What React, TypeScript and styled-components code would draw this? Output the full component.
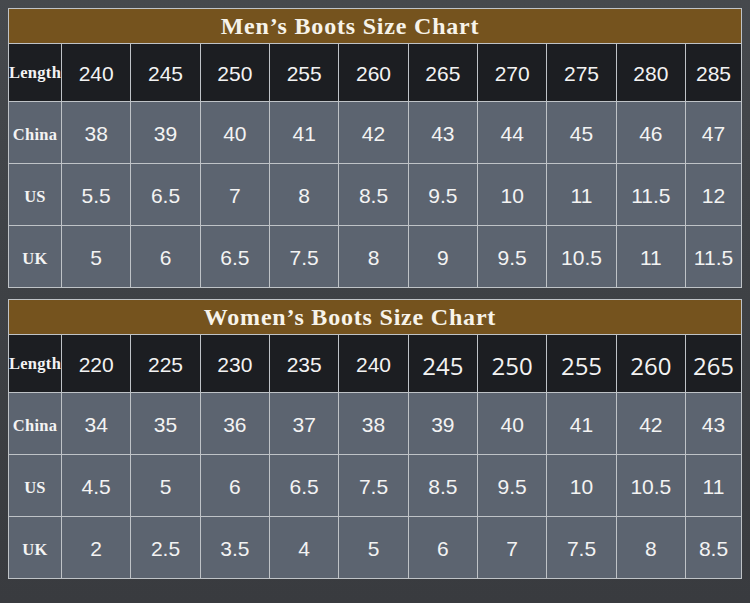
import React from "react";
import styled, { createGlobalStyle } from "styled-components";

const GlobalStyle = createGlobalStyle`
  html, body {
    margin: 0;
    padding: 0;
  }
  body {
    background: #3b3e42;
  }
`;

const Page = styled.div`
  min-height: 603px;
  box-sizing: border-box;
  padding: 8px 0 0 8px;
  background: linear-gradient(180deg, #46494d 0%, #3e4145 50%, #393b3f 100%);
  display: flex;
  flex-direction: column;
  gap: 11px;
`;

const Chart = styled.div`
  width: 734px;
  box-sizing: border-box;
  display: grid;
  grid-template-columns: 52px repeat(9, 1fr) 55px;
  grid-template-rows: 34px 57px 61px 61px 61px;
  gap: 1px;
  padding: 1px;
  background: #bfc3c7;
`;

const Title = styled.div`
  grid-column: 1 / -1;
  background: #75531e;
  color: #f7f3ea;
  font-family: "Liberation Serif", "DejaVu Serif", serif;
  font-weight: bold;
  font-size: 24px;
  letter-spacing: 0.8px;
  display: flex;
  align-items: center;
  justify-content: center;
  padding-right: 50px;
`;

const Cell = styled.div<{ $head?: boolean }>`
  background: ${(p) => (p.$head ? "#1c1e22" : "#5c6470")};
  color: #f3f3f3;
  display: flex;
  align-items: center;
  justify-content: center;
  padding-top: 3px;
  box-sizing: border-box;
`;

const Label = styled(Cell)`
  font-family: "Liberation Serif", "DejaVu Serif", serif;
  font-weight: bold;
  font-size: 16.5px;
  letter-spacing: 0.3px;
  padding-top: ${(p) => (p.$head ? "0" : "4px")};
`;

const Value = styled(Cell)<{ $alt?: boolean }>`
  font-family: ${(p) =>
    p.$alt ? `"Open Sans", "Noto Sans", sans-serif` : `"Liberation Sans", Arial, sans-serif`};
  font-size: ${(p) => (p.$alt ? "24px" : "21px")};
`;

type Row = { label: string; values: string[]; altFrom?: number };

type ChartData = { title: string; rows: Row[] };

const charts: ChartData[] = [
  {
    title: "Men’s Boots Size Chart",
    rows: [
      { label: "Length", values: ["240", "245", "250", "255", "260", "265", "270", "275", "280", "285"] },
      { label: "China", values: ["38", "39", "40", "41", "42", "43", "44", "45", "46", "47"] },
      { label: "US", values: ["5.5", "6.5", "7", "8", "8.5", "9.5", "10", "11", "11.5", "12"] },
      { label: "UK", values: ["5", "6", "6.5", "7.5", "8", "9", "9.5", "10.5", "11", "11.5"] },
    ],
  },
  {
    title: "Women’s Boots Size Chart",
    rows: [
      {
        label: "Length",
        values: ["220", "225", "230", "235", "240", "245", "250", "255", "260", "265"],
        altFrom: 5,
      },
      { label: "China", values: ["34", "35", "36", "37", "38", "39", "40", "41", "42", "43"] },
      { label: "US", values: ["4.5", "5", "6", "6.5", "7.5", "8.5", "9.5", "10", "10.5", "11"] },
      { label: "UK", values: ["2", "2.5", "3.5", "4", "5", "6", "7", "7.5", "8", "8.5"] },
    ],
  },
];

function SizeChart({ data }: { data: ChartData }) {
  return (
    <Chart>
      <Title>{data.title}</Title>
      {data.rows.map((row, ri) => (
        <React.Fragment key={row.label}>
          <Label $head={ri === 0}>{row.label}</Label>
          {row.values.map((v, i) => (
            <Value
              key={i}
              $head={ri === 0}
              $alt={row.altFrom !== undefined && i >= row.altFrom}
            >
              {v}
            </Value>
          ))}
        </React.Fragment>
      ))}
    </Chart>
  );
}

export default function App() {
  return (
    <>
      <GlobalStyle />
      <Page>
        {charts.map((c) => (
          <SizeChart key={c.title} data={c} />
        ))}
      </Page>
    </>
  );
}
